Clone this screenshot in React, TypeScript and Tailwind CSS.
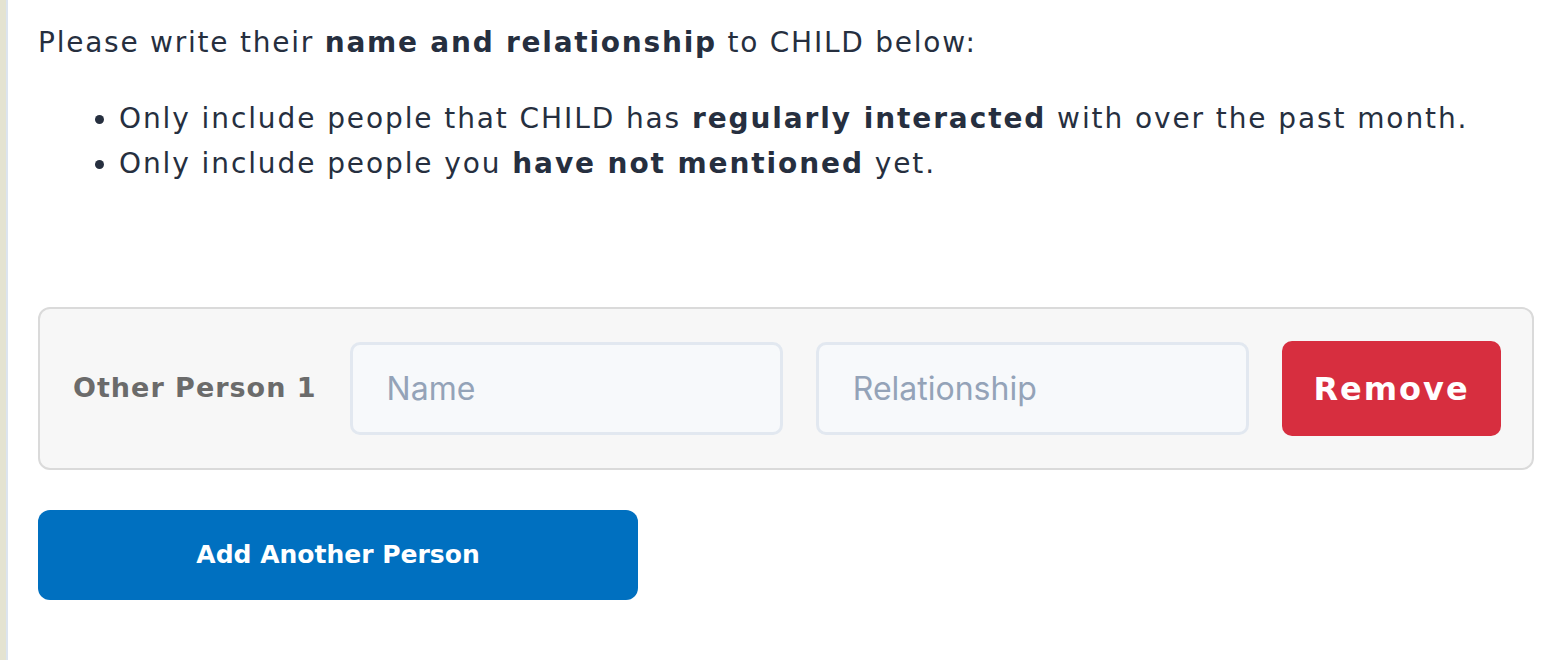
import { useState } from "react"

type Person = { name: string; relationship: string }

function PersonRow({ index, person, onChange, onRemove }: {
    index: number
    person: Person
    onChange: (p: Person) => void
    onRemove: () => void
}) {
    return (
        <div className="flex items-center gap-[33px] rounded-xl border-2 border-[#dadada] bg-[#f7f7f7] py-[32px] pl-[33px] pr-[31px]">
            <div className="shrink-0 text-[27px] font-bold tracking-[1px] text-[#6b6b6b]">
                Other Person {index + 1}
            </div>
            <input
                className="h-[93px] w-0 min-w-0 flex-1 rounded-[10px] border-[3px] border-[#e2e8f0] bg-[#f7f9fb] px-[34px] text-[32px] text-[#1e293b] outline-none placeholder:text-[#94a3b8] font-['Inter',sans-serif]"
                placeholder="Name"
                value={person.name}
                onChange={(e) => onChange({ ...person, name: e.target.value })}
            />
            <input
                className="h-[93px] w-0 min-w-0 flex-1 rounded-[10px] border-[3px] border-[#e2e8f0] bg-[#f7f9fb] px-[34px] text-[32px] text-[#1e293b] outline-none placeholder:text-[#94a3b8] font-['Inter',sans-serif]"
                placeholder="Relationship"
                value={person.relationship}
                onChange={(e) => onChange({ ...person, relationship: e.target.value })}
            />
            <button
                onClick={onRemove}
                className="h-[95px] w-[219px] shrink-0 rounded-[10px] bg-[#d72e3f] text-[32px] font-bold tracking-[2px] text-white"
            >
                Remove
            </button>
        </div>
    )
}

function App() {
    const [people, setPeople] = useState<Person[]>([{ name: "", relationship: "" }])

    return (
        <div className="flex min-h-[660px] w-full bg-white font-['DejaVu_Sans',sans-serif] text-[#262f3f]">
            <div className="w-[6px] shrink-0 bg-[#e4e3d1]" />
            <div className="w-[2px] shrink-0 bg-[#dce4ee]" />
            <div className="min-w-0 flex-1 pl-[30px] pr-[14px] pt-[24px]">
                <p className="text-[28px] leading-[38px] tracking-[0.063em]">
                    Please write their <b className="font-bold">name and relationship</b> to CHILD below:
                </p>
                <ul className="mt-[34px] list-disc pl-[81px] text-[28px] leading-[45px] tracking-[0.068em]">
                    <li>Only include people that CHILD has <b className="font-bold">regularly interacted</b> with over the past month.</li>
                    <li>Only include people you <b className="font-bold">have not mentioned</b> yet.</li>
                </ul>
                <div className="mt-[121px] flex flex-col gap-4">
                    {people.map((p, i) => (
                        <PersonRow
                            key={i}
                            index={i}
                            person={p}
                            onChange={(np) => setPeople(people.map((x, j) => (j === i ? np : x)))}
                            onRemove={() => setPeople(people.filter((_, j) => j !== i))}
                        />
                    ))}
                </div>
                <button
                    onClick={() => setPeople([...people, { name: "", relationship: "" }])}
                    className="mt-[40px] h-[90px] w-[600px] rounded-xl bg-[#0070c0] text-[25px] font-semibold text-white"
                >
                    Add Another Person
                </button>
            </div>
        </div>
    )
}

export default App
